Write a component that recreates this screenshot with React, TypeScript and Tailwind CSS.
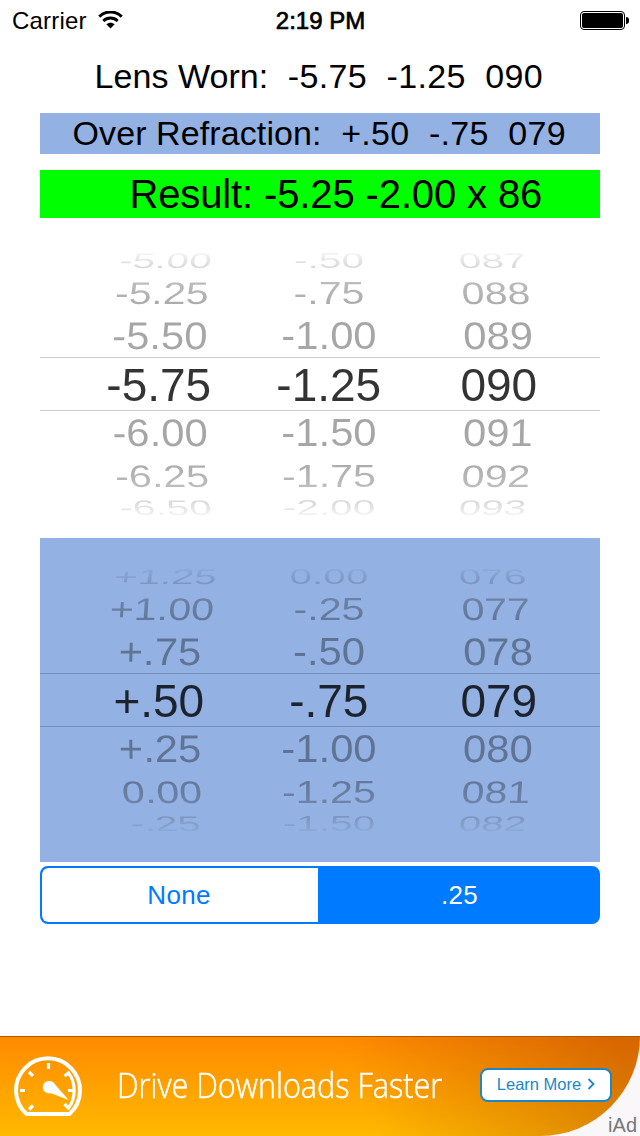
import React from "react";

type WheelRow = { y: number; sx: number; sy: number; skew: number; shift: number; height: string };

const wheel: WheelRow[] = [
  { y: -0.3, sx: 0.965, sy: 0.505, skew: 8, shift: 6.5, height: "h-[21px]" },
  { y: 0.2, sx: 0.98, sy: 0.745, skew: 3.5, shift: 3, height: "h-[43px]" },
  { y: 0, sx: 0.995, sy: 0.915, skew: 1.2, shift: 1, height: "h-[43px]" },
  { y: 0.7, sx: 1, sy: 1, skew: 0, shift: 0, height: "h-[54px]" },
  { y: 0, sx: 0.995, sy: 0.915, skew: -1.2, shift: 1, height: "h-[43px]" },
  { y: 0.2, sx: 0.98, sy: 0.745, skew: -3.5, shift: 3, height: "h-[43px]" },
  { y: -0.3, sx: 0.965, sy: 0.505, skew: -8, shift: 6.5, height: "h-[21px]" },
];

function Picker({ rows }: { rows: string[][] }) {
  return (
    <div className="w-[560px] pt-[28px] [mask-image:linear-gradient(to_bottom,transparent_25px,rgba(0,0,0,.45)_46px,rgba(0,0,0,.75)_60px,black_90px,black_235px,rgba(0,0,0,.75)_264px,rgba(0,0,0,.45)_278px,transparent_300px)]">
      {rows.map((cells, i) => {
        const r = wheel[i];
        return (
          <div
            key={i}
            className={`grid grid-cols-[170px_170px_170px] items-center pl-[33.8px] ${r.height} ${
              i === 3
                ? "border-y border-black/20 text-[46px] text-black/80"
                : "text-[42px] text-black/35"
            }`}
          >
            {cells.map((text, c) => (
              <span
                key={c}
                className="block text-center leading-[20px] whitespace-nowrap"
                style={{
                  transform: `translate(${(1 - c) * r.shift}px, ${r.y}px) skewX(${
                    (c - 1) * r.skew
                  }deg) scale(${r.sx}, ${r.sy})`,
                }}
              >
                {text}
              </span>
            ))}
          </div>
        );
      })}
    </div>
  );
}

const lensRows = [
  ["-5.00", "-.50", "087"],
  ["-5.25", "-.75", "088"],
  ["-5.50", "-1.00", "089"],
  ["-5.75", "-1.25", "090"],
  ["-6.00", "-1.50", "091"],
  ["-6.25", "-1.75", "092"],
  ["-6.50", "-2.00", "093"],
];

const overRows = [
  ["+1.25", "0.00", "076"],
  ["+1.00", "-.25", "077"],
  ["+.75", "-.50", "078"],
  ["+.50", "-.75", "079"],
  ["+.25", "-1.00", "080"],
  ["0.00", "-1.25", "081"],
  ["-.25", "-1.50", "082"],
];

function WifiIcon() {
  return (
    <svg className="ml-[11px] h-[18px] w-[25px]" viewBox="0 0 25 18" fill="none">
      <path d="M1.300 5.600C7.500-.600 17.500-.600 23.700 5.600" stroke="black" strokeWidth="3" />
      <path d="M5.300 9.900c4-3.900 10.400-3.900 14.400 0" stroke="black" strokeWidth="2.8" />
      <path d="M8.300 13.300c2.300-2.200 6.100-2.200 8.400 0L12.500 17.600z" fill="black" />
    </svg>
  );
}

function Gauge() {
  return (
    <svg className="mb-[2px] ml-[13px] h-[62px] w-[70px]" viewBox="0 0 70 62" fill="none" stroke="white">
      <path d="M13.500 59A32 32 0 1 1 56.500 59Z" strokeWidth="4" strokeLinejoin="bevel" />
      <path d="M35.500 8v6M7 35.500h5M60 35.500h-5M16 17l4 4M16 54.500l4-4" strokeWidth="3.2" />
      <path d="M51.500 21l4-3C63 27.500 63 43.500 55.500 53l-4-4" strokeWidth="3.2" />
      <path
        d="M36 26c3 0 5.200 1.500 6.500 4L55.700 45L38 38.300C33.500 39 29.800 36.300 29.800 32.300C29.800 28.800 32.500 26 36 26Z"
        fill="white"
        stroke="none"
      />
    </svg>
  );
}

export default function App() {
  return (
    <div className="flex h-[1136px] w-[640px] flex-col overflow-hidden bg-white font-['Liberation_Sans',Arial,sans-serif] text-black">
      <header className="grid h-[40px] grid-cols-3 items-center pr-[11px] pl-[12px] text-[24px] leading-[38px]">
        <div className="flex items-center">
          <span className="pt-[2px] tracking-[0.2px]">Carrier</span>
          <WifiIcon />
        </div>
        <span className="pt-[2px] text-center [-webkit-text-stroke:0.7px_black]">2:19 PM</span>
        <div className="flex items-center justify-end">
          <div className="h-[19px] w-[45px] rounded-[4px] border border-black p-px">
            <div className="h-full w-full rounded-[2px] bg-black" />
          </div>
          <div className="ml-px h-[7px] w-[3px] rounded-r-full bg-black" />
        </div>
      </header>

      <div className="mt-[16px] flex h-[41px] items-center pl-[94.5px] text-[34px] whitespace-pre">
        <span className="tracking-[0.05px]">Lens Worn:</span>
        <span className="tracking-[0.33px]">{"  -5.75  -1.25  090"}</span>
      </div>
      <div className="mx-[40px] mt-[16px] flex h-[41px] items-center bg-[#93b1e3] pl-[32.5px] text-[34px] whitespace-pre">
        <span className="tracking-[0.1px]">Over Refraction:</span>
        <span className="tracking-[0.3px]">{"  +.50  -.75  079"}</span>
      </div>
      <div className="mx-[40px] mt-[16px] flex h-[48px] items-center bg-[#00ff00] pl-[89.5px] text-[40px] tracking-[-0.13px] whitespace-pre">
        Result: -5.25 -2.00 x 86
      </div>

      <div className="mx-[40px] mt-[4px] h-[316px]">
        <Picker rows={lensRows} />
      </div>
      <div className="mx-[40px] h-[324px] bg-[#93b1e3]">
        <Picker rows={overRows} />
      </div>

      <div className="mx-[40px] mt-[4px] flex h-[58px] overflow-hidden rounded-[8px] border-2 border-[#007aff] bg-[#007aff] text-[26px] tracking-[0.3px]">
        <button className="w-[276px] rounded-l-[6px] bg-white pr-[2px] text-[#007aff]">None</button>
        <button className="flex-1 pl-[3px] text-white">.25</button>
      </div>

      <footer className="relative mt-auto h-[100px] bg-[#f9f7fa]">
        <div className="flex h-[100px] items-center rounded-br-[100px] border-t border-[#a85c08] bg-[linear-gradient(70deg,rgba(150,40,0,0)_55%,rgba(150,40,0,.2)_78%,rgba(150,40,0,.37)_96%),linear-gradient(to_bottom,#ff8a00,#ffb900)]">
          <Gauge />
          <span className="ml-[34px] w-[328px] origin-left scale-x-[.9] pb-[2px] font-['Open_Sans',sans-serif] text-[34px] font-light whitespace-nowrap text-white [-webkit-text-stroke:0.5px_white]">
            Drive Downloads Faster
          </span>
          <button className="mb-[3px] ml-[35px] flex h-[34px] w-[132px] items-center justify-center gap-[6px] rounded-[8px] border-2 border-[#1b87c9] bg-white pb-[2px] text-[16.5px] text-[#1b87c9]">
            Learn More
            <svg className="h-[12px] w-[8px]" viewBox="0 0 8 12" fill="none">
              <path d="M1.500 1l5 5-5 5" stroke="#1b87c9" strokeWidth="1.8" />
            </svg>
          </button>
        </div>
        <span className="absolute right-[3px] bottom-0 text-[20px] leading-[22px] text-[#777]">iAd</span>
      </footer>
    </div>
  );
}
